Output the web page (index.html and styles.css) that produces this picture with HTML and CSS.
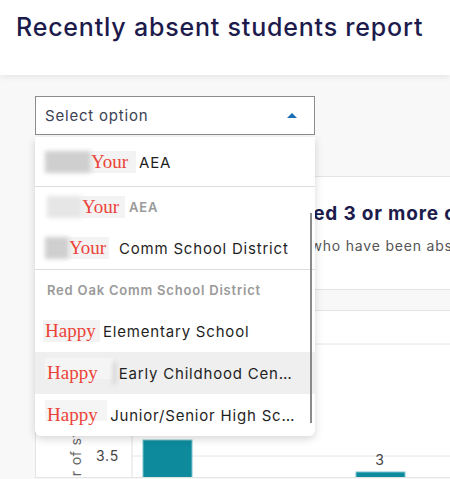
FILE: index.html
```html
<!DOCTYPE html>
<html lang="en">
<head>
    <meta charset="UTF-8">
    <meta name="viewport" content="width=device-width, initial-scale=1.0">
    <title>Recently absent students report</title>
    <link rel="stylesheet" href="styles.css">
</head>
<body>
    <header class="page-header">
        <h1>Recently absent students report</h1>
    </header>

    <main class="report">
        <div class="select-wrap">
            <div class="select-box">
                <span>Select option</span>
                <span class="caret"></span>
            </div>

            <div class="menu">
                <div class="group first">
                    <div class="opt">
                        <span class="blur dark w46"></span><span class="mask w45">Your</span>
                        <span class="opt-text">AEA</span>
                    </div>
                </div>
                <div class="group">
                    <div class="group-label">
                        <span class="blur light w35"></span><span class="mask w43">Your</span>
                        <span>AEA</span>
                    </div>
                    <div class="opt">
                        <span class="blur dark w24"></span><span class="mask w40">Your</span>
                        <span class="opt-text sp">Comm School District</span>
                    </div>
                </div>
                <div class="group last">
                    <div class="group-label">Red Oak Comm School District</div>
                    <div class="opt">
                        <span class="mask w55 tight">Happy</span>
                        <span class="opt-text">Elementary School</span>
                    </div>
                    <div class="opt active">
                        <span class="mask w67 low">Happy</span><span class="blur dark w3"></span>
                        <span class="opt-text">Early Childhood Center</span>
                    </div>
                    <div class="opt">
                        <span class="mask w66 low">Happy</span>
                        <span class="opt-text">Junior/Senior High School</span>
                    </div>
                </div>
                <div class="scrollbar"></div>
            </div>
        </div>

        <section class="card summary">
            <h2>Students who have missed 3 or more consecutive days</h2>
            <p>This list shows the students who have been absent recently</p>
        </section>

        <section class="card chart">
            <svg width="415" height="166" viewBox="0 0 415 166">
                <line x1="96" y1="33" x2="415" y2="33" class="grid"/>
                <line x1="96" y1="145" x2="415" y2="145" class="grid"/>
                <line x1="96" y1="0" x2="96" y2="166" class="axis"/>
                <text x="83" y="150" text-anchor="end" class="tick">3.5</text>
                <text transform="translate(45 217) rotate(-90)" class="axis-label">Number of students</text>
                <rect x="107" y="129" width="49" height="40" class="bar"/>
                <rect x="320" y="161" width="49" height="10" class="bar"/>
                <text x="344" y="154" text-anchor="middle" class="tick">3</text>
            </svg>
        </section>
    </main>
</body>
</html>
```

FILE: styles.css
```css
body {
    margin: 0;
    font-family: Inter, Arial, sans-serif;
    letter-spacing: 0.8px;
    background-color: #f8f8f8;
    color: #222;
    overflow: hidden;
}
.page-header {
    background-color: white;
    height: 75px;
    padding-left: 16px;
    box-shadow: 0 2px 6px rgba(0, 0, 0, 0.08);
}
.page-header h1 {
    margin: 0;
    padding-top: 12px;
    font-size: 25px;
    font-weight: 500;
    color: #1d1b4c;
}
.report {
    padding: 21px 0 0 35px;
}
.select-wrap {
    position: relative;
    width: 280px;
}
.select-box {
    height: 37px;
    border: 1px solid #8c8c8c;
    background-color: white;
    display: flex;
    align-items: center;
    justify-content: space-between;
    padding: 0 17px 0 9px;
    font-size: 15px;
    color: #3b4254;
}
.caret {
    width: 0;
    height: 0;
    border-left: 5px solid transparent;
    border-right: 5px solid transparent;
    border-bottom: 5px solid #1a6eb5;
}

/* dropdown abierto, encima de las tarjetas */
.menu {
    position: absolute;
    top: 41px;
    left: 0;
    width: 280px;
    background-color: white;
    border-radius: 0 0 6px 6px;
    box-shadow: 0 3px 8px rgba(0, 0, 0, 0.16);
    padding-top: 4px;
    z-index: 10;
}
.group {
    border-bottom: 1px solid #dcdcdc;
}
.group.first {
    padding-bottom: 3px;
}
.group.last {
    border-bottom: none;
}
.group-label {
    height: 40px;
    display: flex;
    align-items: center;
    padding-left: 12px;
    font-size: 13px;
    font-weight: 600;
    color: #9a9a9a;
}
.opt {
    height: 42px;
    display: flex;
    align-items: center;
    padding: 0 18px 0 10px;
    font-size: 15px;
    color: #1f1f1f;
    white-space: nowrap;
}
.opt.active {
    background-color: #efefef;
}
.opt-text {
    margin-left: 3px;
    overflow: hidden;
    text-overflow: ellipsis;
}
.opt-text.sp {
    margin-left: 10px;
}
.group-label .mask + span {
    margin-left: 4px;
}
.blur {
    display: inline-block;
    height: 22px;
    filter: blur(2px);
}
.blur.dark {
    background-color: #cfcfcf;
}
.blur.light {
    background-color: #e6e6e6;
}
.mask {
    display: inline-block;
    height: 22px;
    line-height: 22px;
    background-color: #f3f3f3;
    font-family: "Liberation Serif", "DejaVu Serif", serif;
    font-size: 19px;
    font-weight: normal;
    letter-spacing: 0;
    color: #ec4339;
    overflow: hidden;
}
.mask.tight {
    margin-left: -2px;
    padding-left: 2px;
}
.mask.low {
    line-height: 30px;
    height: 30px;
    padding-left: 2px;
    background: linear-gradient(#f5f5f5 70%, transparent 70%);
}
.w3 { width: 3px; }
.w24 { width: 24px; }
.w35 { width: 35px; }
.w40 { width: 40px; }
.w43 { width: 43px; }
.w45 { width: 45px; }
.w46 { width: 46px; }
.w55 { width: 55px; }
.w66 { width: 66px; }
.w67 { width: 67px; }
.scrollbar {
    position: absolute;
    right: 3px;
    top: 76px;
    width: 2px;
    height: 210px;
    background-color: #8a8a8a;
}

.card {
    background-color: white;
    border: 1px solid #e4e4e4;
    border-right: none;
    margin: 0;
}
.summary {
    margin-top: 41px;
    height: 114px;
    padding-left: 34px;
    box-sizing: border-box;
    white-space: nowrap;
    overflow: hidden;
}
.summary h2 {
    margin: 25px 0 0;
    font-size: 19px;
    font-weight: 700;
    color: #1d1b4c;
}
.summary p {
    margin: 12px 0 0 30px;
    font-size: 14px;
    color: #555;
}
.chart {
    margin-top: 20px;
    height: 166px;
}
.chart svg {
    display: block;
}
.grid {
    stroke: #e6e6e6;
    stroke-width: 1;
}
.axis {
    stroke: #e0e0e0;
    stroke-width: 1;
}
.tick {
    font-size: 14px;
    fill: #444;
}
.axis-label {
    font-size: 14px;
    fill: #666;
}
.bar {
    fill: #0d8a9c;
    stroke: #7cc4ce;
    stroke-width: 1;
}
```
